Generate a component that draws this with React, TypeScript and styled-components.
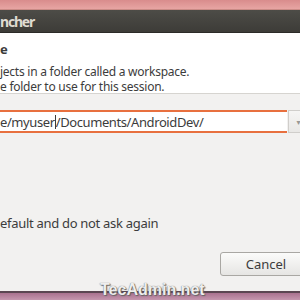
import React from "react";
import styled, { createGlobalStyle } from "styled-components";

const Global = createGlobalStyle`
  html, body { margin: 0; padding: 0; }
  body { width: 300px; height: 300px; overflow: hidden; background: #b9839f; }
  #root { width: 300px; height: 300px; }
`;

const Page = styled.div`
  position: relative;
  width: 300px;
  height: 300px;
  display: flex;
  flex-direction: column;
  overflow: hidden;
  font-family: "Noto Sans", "DejaVu Sans", sans-serif;
`;

const TopStrip = styled.div`
  height: 9px;
  background: linear-gradient(#d98c8c, #e7a5a3);
  border-bottom: 1px solid #c98a85;
`;

const TitleBar = styled.div`
  height: 22px;
  background: linear-gradient(#4d4c47, #3d3c38);
  display: flex;
  align-items: center;
  color: #dfdbd2;
  font-weight: bold;
  font-size: 14px;
  letter-spacing: -1.2px;
  border-bottom: 1px solid #2c2b28;
`;

const Header = styled.div`
  background: #ffffff;
  height: 61px;
  border-bottom: 1px solid #d6d4d0;
  padding-top: 9px;
  box-sizing: border-box;
  color: #3c3c3c;
`;

const Heading = styled.div`
  font-weight: bold;
  font-size: 13px;
  line-height: 14px;
  margin-bottom: 8px;
`;

const Description = styled.p`
  margin: 0;
  font-size: 12px;
  line-height: 15px;
  letter-spacing: -0.25px;
`;

const Body = styled.div`
  flex: 1;
  background: #f2f1f0;
  display: flex;
  flex-direction: column;
  color: #3c3c3c;
  font-size: 13px;
  letter-spacing: -0.4px;
  padding-top: 16px;
  border-bottom: 2px solid #5a4652;
`;

const ComboRow = styled.div`
  display: flex;
  height: 23px;
`;

const Input = styled.div`
  flex: 1;
  background: #fff;
  border-top: 2px solid #e8703f;
  border-bottom: 2px solid #e8703f;
  display: flex;
  align-items: center;
  line-height: 16px;
  box-sizing: border-box;
`;

const Caret = styled.span`
  display: inline-block;
  width: 1px;
  height: 14px;
  background: #3c3c3c;
  vertical-align: -2px;
`;

const ComboButton = styled.div`
  width: 11px;
  margin-left: 1px;
  background: linear-gradient(#f6f5f4, #e9e8e6);
  border: 1px solid #d0cecb;
  border-right: none;
  display: flex;
  align-items: center;
  justify-content: flex-end;
  color: #9a9894;
  font-size: 8px;
`;

const CheckText = styled.div`
  margin-top: 82px;
  line-height: 16px;
  letter-spacing: -0.3px;
`;

const ButtonRow = styled.div`
  display: flex;
  justify-content: flex-end;
  margin-top: 21px;
  margin-right: -12px;
`;

const Button = styled.div`
  width: 92px;
  height: 24px;
  box-sizing: border-box;
  border: 1px solid #a9a7a3;
  border-radius: 3px;
  background: linear-gradient(#fbfbfa, #e6e5e3);
  display: flex;
  align-items: center;
  justify-content: center;
  font-size: 13px;
  letter-spacing: 0;
  color: #3c3c3c;
`;

const BottomStrip = styled.div`
  height: 7px;
  background: linear-gradient(#a9718f, #c497ae);
`;

const Watermark = styled.div`
  position: absolute;
  left: 100px;
  top: 281px;
  font-family: "Liberation Sans", Arial, sans-serif;
  font-weight: bold;
  font-size: 16px;
  color: #eeeeee;
  text-shadow: 0 0 1px #555, 1px 1px 1px #666;
`;

export default function App() {
  return (
    <>
      <Global />
      <Page>
        <TopStrip />
        <TitleBar>ncher</TitleBar>
        <Header>
          <Heading>e</Heading>
          <Description>
            jects in a folder called a workspace.
            <br />
            e folder to use for this session.
          </Description>
        </Header>
        <Body>
          <ComboRow>
            <Input>
              <span>
                e/myuser<Caret />/Documents/AndroidDev/
              </span>
            </Input>
            <ComboButton>▾</ComboButton>
          </ComboRow>
          <CheckText>efault and do not ask again</CheckText>
          <ButtonRow>
            <Button>Cancel</Button>
          </ButtonRow>
        </Body>
        <BottomStrip />
        <Watermark>TecAdmin.net</Watermark>
      </Page>
    </>
  );
}
